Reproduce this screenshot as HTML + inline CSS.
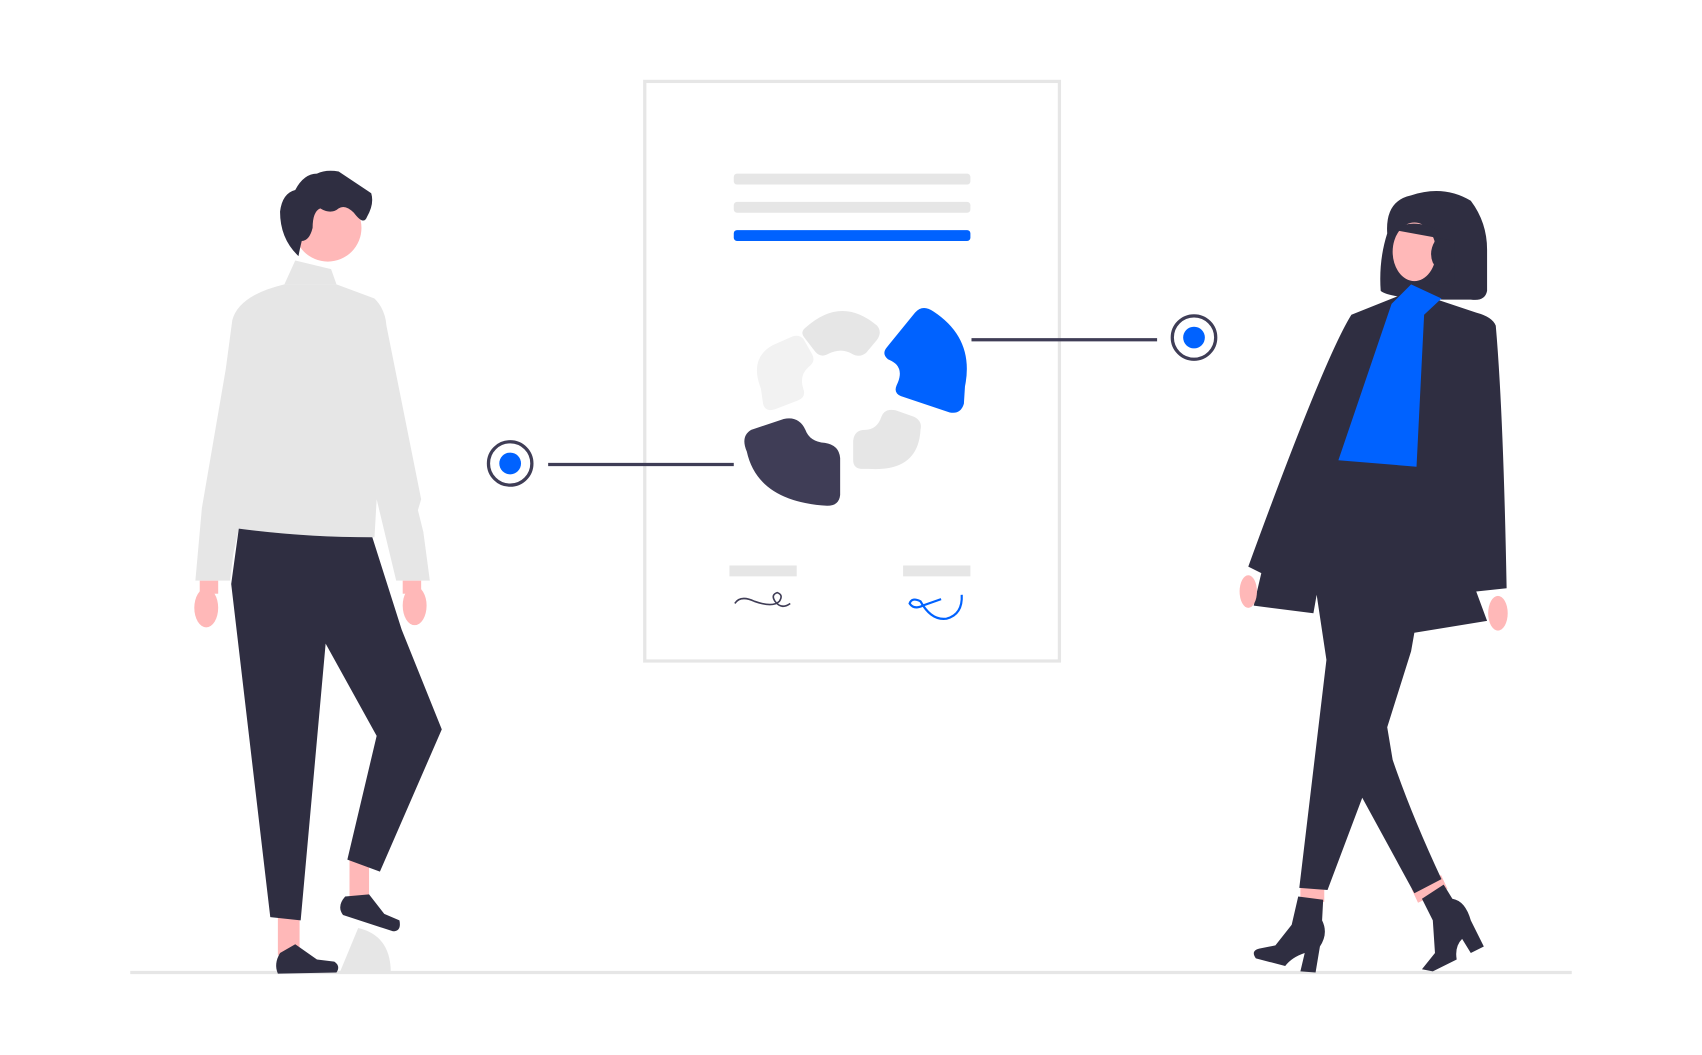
<!DOCTYPE html>
<html><head><meta charset="utf-8"><style>
html,body{margin:0;padding:0;background:#fff;width:1702px;height:1055px;overflow:hidden}
svg{display:block}
</style></head><body>
<svg width="1702" height="1055" viewBox="0 0 1568 972" preserveAspectRatio="none" xmlns="http://www.w3.org/2000/svg">
<rect width="1568" height="972" fill="#fff"/>
<line x1="120" y1="896" x2="1448" y2="896" stroke="#e6e6e6" stroke-width="3"/>
<rect x="594" y="75" width="382" height="534" fill="none" stroke="#e6e6e6" stroke-width="3"/>
<rect x="676" y="160" width="218" height="10" rx="3" fill="#e6e6e6"/>
<rect x="676" y="186" width="218" height="10" rx="3" fill="#e6e6e6"/>
<rect x="676" y="212" width="218" height="10" rx="3" fill="#0062ff"/>
<path d="M742,302 Q775,272 808,300 Q813,306 808,313 L798,325 Q792,330 785,326 Q775,320 763,326 Q756,330 751,324 L741,311 Q737,306 742,302Z" fill="#e6e6e6"/>
<path d="M730,310 Q736,308 740,312 L748,326 Q752,333 745,338 Q736,346 740,358 Q743,366 735,369 L714,377 Q705,380 703,372 L701,358 Q690,330 712,318Z" fill="#f2f2f2"/>
<path d="M843,288 Q850,280 860,287 Q898,312 889,356 L888,372 Q885,382 875,380 L830,365 Q823,362 826,355 Q832,343 826,336 Q823,333 818,331 Q812,326 817,320Z" fill="#0062ff"/>
<path d="M812,384 Q815,376 825,378 L842,384 Q850,388 848,396 Q846,435 800,432 L793,432 Q786,431 786,424 L786,406 Q787,396 797,396 Q808,396 812,384Z" fill="#e6e6e6"/>
<path d="M692,396 L722,386 Q736,383 742,396 Q746,407 760,408 Q773,410 774,422 L774,456 Q773,466 762,466 Q698,462 688,416 Q682,402 692,396Z" fill="#3f3d56"/>
<line x1="895" y1="313" x2="1066" y2="313" stroke="#3f3d56" stroke-width="3"/>
<circle cx="1100" cy="311" r="20" fill="none" stroke="#3f3d56" stroke-width="3"/>
<circle cx="1100" cy="311" r="10" fill="#0062ff"/>
<line x1="505" y1="428" x2="676" y2="428" stroke="#3f3d56" stroke-width="3"/>
<circle cx="470" cy="427" r="20" fill="none" stroke="#3f3d56" stroke-width="3"/>
<circle cx="470" cy="427" r="10" fill="#0062ff"/>
<rect x="672" y="521" width="62" height="10" fill="#e6e6e6"/>
<rect x="832" y="521" width="62" height="10" fill="#e6e6e6"/>
<path d="M677,556 Q682,548 695,554 Q712,560 718,554 Q722,548 716,546 Q710,548 714,554 Q720,562 728,556" fill="none" stroke="#3f3d56" stroke-width="1.5"/>
<path d="M867,552 L850,558 Q842,562 838,556 Q840,550 848,554 Q858,572 872,570 Q887,566 886,548" fill="none" stroke="#0062ff" stroke-width="2"/>
<path d="M313,896 L330,855 Q360,862 360,896Z" fill="#e6e6e6"/>
<rect x="256" y="840" width="20" height="40" fill="#ffb8b8"/>
<rect x="322" y="790" width="18" height="38" fill="#ffb8b8"/>
<circle cx="302" cy="210" r="31" fill="#ffb8b8"/>
<path d="M275,236 Q258,220 258,195 Q260,178 272,175 Q280,160 292,160 Q300,156 312,158 Q330,170 342,178 Q345,188 338,200 Q335,208 326,196 Q318,188 312,192 Q305,198 295,192 Q288,195 288,210 Q285,222 278,222 Q276,230 275,236Z" fill="#2f2e41"/>
<path d="M272,240 L305,248 L310,262 L262,262Z" fill="#e6e6e6"/>
<path d="M262,262 L310,262 L345,275 Q355,285 356,300 L388,460 L385,470 L390,490 L396,535 L365,535 L347,460 L345,495 Q280,495 220,487 L215,510 L212,535 L180,535 L186,468 L208,340 L214,295 Q220,272 262,262Z" fill="#e6e6e6"/>
<rect x="184" y="535" width="17" height="12" fill="#ffb8b8"/>
<rect x="371" y="535" width="17" height="12" fill="#ffb8b8"/>
<ellipse cx="190" cy="560" rx="11" ry="18" fill="#ffb8b8"/>
<ellipse cx="382" cy="558" rx="11" ry="18" fill="#ffb8b8"/>
<path d="M220,487 Q280,495 343,495 L370,580 L407,672 L350,803 L320,792 L347,678 L300,593 L277,848 L249,845 L213,538Z" fill="#2f2e41"/>
<path d="M258,878 L272,870 L292,884 L308,886 Q314,890 310,896 L256,897 Q252,888 258,878Z" fill="#2f2e41"/>
<path d="M318,826 L340,824 L354,842 L368,848 Q370,858 362,858 L316,843 Q310,835 318,826Z" fill="#2f2e41"/>
<path d="M1278,215 Q1276,185 1300,180 Q1330,170 1355,185 Q1370,205 1370,230 L1370,268 Q1368,278 1355,276 L1330,276 Q1280,275 1272,268 Q1270,240 1278,215Z" fill="#2f2e41"/>
<ellipse cx="1303" cy="232" rx="20" ry="27" fill="#ffb8b8"/>
<path d="M1285,212 Q1300,200 1325,212 L1322,222 Q1316,232 1320,242 Q1326,250 1316,260 L1340,262 L1340,222Z" fill="#2f2e41"/>
<rect x="1198" y="815" width="22" height="16" fill="#ffb8b8"/>
<rect x="1302" y="812" width="30" height="14" fill="#ffb8b8" transform="rotate(-25 1317 819)"/>
<path d="M1245,290 L1300,268 L1360,288 Q1375,292 1378,300 Q1385,380 1388,542 L1360,545 L1370,572 L1303,583 L1300,600 L1278,670 L1283,700 Q1300,750 1328,810 L1303,823 L1255,735 L1223,820 L1197,818 L1222,608 L1213,548 L1210,565 L1155,558 L1162,528 L1150,522 Q1220,330 1245,290Z" fill="#2f2e41"/>
<path d="M1300,262 L1328,275 L1312,290 L1305,430 L1233,424 L1282,280Z" fill="#0062ff"/>
<ellipse cx="1150" cy="545" rx="8" ry="15" fill="#ffb8b8"/>
<ellipse cx="1380" cy="565" rx="9" ry="16" fill="#ffb8b8"/>
<path d="M1196,826 L1219,829 L1218,848 Q1224,860 1216,872 L1212,896 L1198,895 L1202,878 Q1190,882 1184,890 L1157,883 Q1152,876 1160,874 L1175,871 L1190,852Z" fill="#2f2e41"/>
<path d="M1310,828 L1330,815 L1338,828 Q1350,830 1355,848 L1367,872 L1355,878 L1347,865 Q1340,872 1342,884 L1320,895 L1310,893 L1322,878 L1320,848Z" fill="#2f2e41"/>
</svg>
</body></html>
